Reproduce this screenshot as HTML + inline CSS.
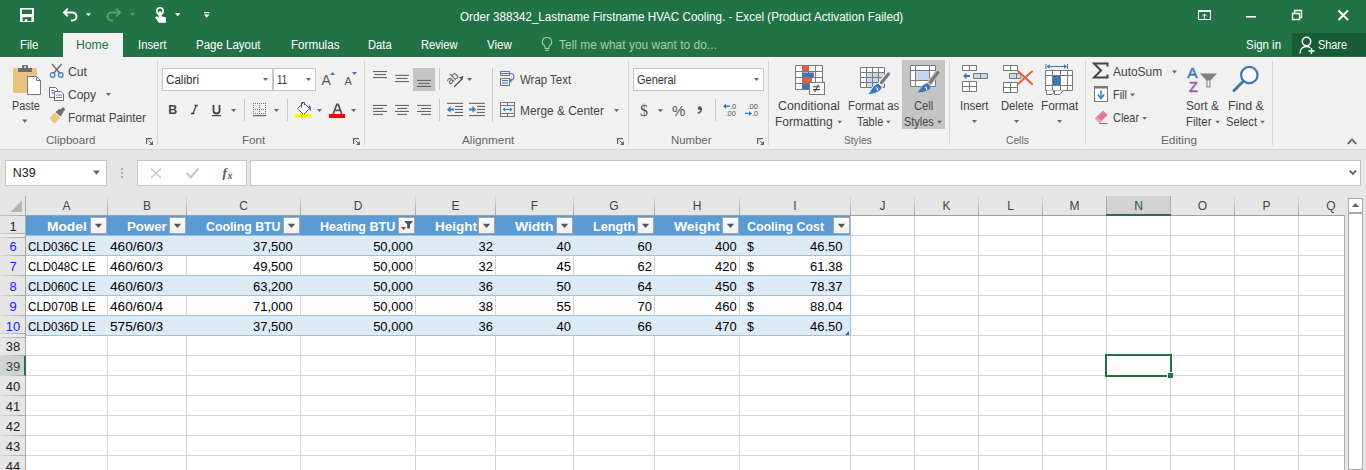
<!DOCTYPE html>
<html><head><meta charset="utf-8"><style>
html,body{margin:0;padding:0;width:1366px;height:470px;overflow:hidden;background:#fff;}
body{position:relative;font-family:"Liberation Sans",sans-serif;}
.t{position:absolute;white-space:nowrap;transform-origin:0 0;}
.r{position:absolute;}
</style></head><body>
<div class="r" style="left:0px;top:0px;width:1366px;height:57px;background:#217346;"></div><div class="r" style="left:63px;top:33px;width:60px;height:24px;background:#f1f1f1;"></div><div class="r" style="left:1292px;top:33px;width:74px;height:23px;background:#175c35;"></div><div class="r" style="left:0px;top:57px;width:1366px;height:92px;background:#f1f1f1;"></div><div class="r" style="left:0px;top:149px;width:1366px;height:1px;background:#d5d5d5;"></div><div class="r" style="left:0px;top:150px;width:1366px;height:46px;background:#e6e6e6;"></div><div class="r" style="left:5px;top:160px;width:102px;height:26px;background:#fff;box-sizing:border-box;border:1px solid #c6c6c6;"></div><div class="r" style="left:137px;top:160px;width:110px;height:26px;background:#fff;box-sizing:border-box;border:1px solid #c6c6c6;"></div><div class="r" style="left:250px;top:160px;width:1111px;height:26px;background:#fff;box-sizing:border-box;border:1px solid #c6c6c6;"></div><div class="r" style="left:0px;top:196px;width:1344px;height:20px;background:#e6e6e6;"></div><div class="r" style="left:0px;top:196px;width:26px;height:274px;background:#e6e6e6;"></div><div class="r" style="left:26px;top:216px;width:1318px;height:254px;background:#fff;"></div><svg class="r" style="left:0;top:0" width="1366" height="470"><rect x="107" y="216" width="1" height="254" fill="#d4d4d4"/><rect x="186" y="216" width="1" height="254" fill="#d4d4d4"/><rect x="300" y="216" width="1" height="254" fill="#d4d4d4"/><rect x="415" y="216" width="1" height="254" fill="#d4d4d4"/><rect x="495" y="216" width="1" height="254" fill="#d4d4d4"/><rect x="573" y="216" width="1" height="254" fill="#d4d4d4"/><rect x="654" y="216" width="1" height="254" fill="#d4d4d4"/><rect x="739" y="216" width="1" height="254" fill="#d4d4d4"/><rect x="850" y="216" width="1" height="254" fill="#d4d4d4"/><rect x="914" y="216" width="1" height="254" fill="#d4d4d4"/><rect x="978" y="216" width="1" height="254" fill="#d4d4d4"/><rect x="1042" y="216" width="1" height="254" fill="#d4d4d4"/><rect x="1106" y="216" width="1" height="254" fill="#d4d4d4"/><rect x="1170" y="216" width="1" height="254" fill="#d4d4d4"/><rect x="1234" y="216" width="1" height="254" fill="#d4d4d4"/><rect x="1298" y="216" width="1" height="254" fill="#d4d4d4"/><rect x="26" y="235" width="1318" height="1" fill="#d4d4d4"/><rect x="26" y="255" width="1318" height="1" fill="#d4d4d4"/><rect x="26" y="275" width="1318" height="1" fill="#d4d4d4"/><rect x="26" y="295" width="1318" height="1" fill="#d4d4d4"/><rect x="26" y="315" width="1318" height="1" fill="#d4d4d4"/><rect x="26" y="335" width="1318" height="1" fill="#d4d4d4"/><rect x="26" y="355" width="1318" height="1" fill="#d4d4d4"/><rect x="26" y="375" width="1318" height="1" fill="#d4d4d4"/><rect x="26" y="395" width="1318" height="1" fill="#d4d4d4"/><rect x="26" y="415" width="1318" height="1" fill="#d4d4d4"/><rect x="26" y="435" width="1318" height="1" fill="#d4d4d4"/><rect x="26" y="455" width="1318" height="1" fill="#d4d4d4"/><rect x="26" y="475" width="1318" height="1" fill="#d4d4d4"/></svg><div class="r" style="left:26px;top:216px;width:825px;height:19px;background:#5b9bd5;"></div><div class="r" style="left:26px;top:236px;width:825px;height:19px;background:#ddebf7;"></div><div class="r" style="left:26px;top:255px;width:825px;height:1px;background:#9bc2e6;"></div><div class="r" style="left:26px;top:275px;width:825px;height:1px;background:#9bc2e6;"></div><div class="r" style="left:26px;top:276px;width:825px;height:19px;background:#ddebf7;"></div><div class="r" style="left:26px;top:295px;width:825px;height:1px;background:#9bc2e6;"></div><div class="r" style="left:26px;top:315px;width:825px;height:1px;background:#9bc2e6;"></div><div class="r" style="left:26px;top:316px;width:825px;height:19px;background:#ddebf7;"></div><div class="r" style="left:26px;top:335px;width:825px;height:1px;background:#9bc2e6;"></div><div class="r" style="left:26px;top:235px;width:825px;height:1px;background:#9bc2e6;"></div><div class="r" style="left:850px;top:216px;width:1px;height:120px;background:#9bc2e6;"></div><div class="r" style="left:1106px;top:196px;width:64px;height:19px;background:#d2d2d2;"></div><div class="r" style="left:1106px;top:196px;width:1px;height:19px;background:#ababab;"></div><div class="r" style="left:1170px;top:196px;width:1px;height:19px;background:#ababab;"></div><div class="r" style="left:107px;top:196px;width:1px;height:19px;background:linear-gradient(#e0e0e0,#a0a0a0);"></div><div class="r" style="left:186px;top:196px;width:1px;height:19px;background:linear-gradient(#e0e0e0,#a0a0a0);"></div><div class="r" style="left:300px;top:196px;width:1px;height:19px;background:linear-gradient(#e0e0e0,#a0a0a0);"></div><div class="r" style="left:415px;top:196px;width:1px;height:19px;background:linear-gradient(#e0e0e0,#a0a0a0);"></div><div class="r" style="left:495px;top:196px;width:1px;height:19px;background:linear-gradient(#e0e0e0,#a0a0a0);"></div><div class="r" style="left:573px;top:196px;width:1px;height:19px;background:linear-gradient(#e0e0e0,#a0a0a0);"></div><div class="r" style="left:654px;top:196px;width:1px;height:19px;background:linear-gradient(#e0e0e0,#a0a0a0);"></div><div class="r" style="left:739px;top:196px;width:1px;height:19px;background:linear-gradient(#e0e0e0,#a0a0a0);"></div><div class="r" style="left:850px;top:196px;width:1px;height:19px;background:linear-gradient(#e0e0e0,#a0a0a0);"></div><div class="r" style="left:914px;top:196px;width:1px;height:19px;background:linear-gradient(#e0e0e0,#a0a0a0);"></div><div class="r" style="left:978px;top:196px;width:1px;height:19px;background:linear-gradient(#e0e0e0,#a0a0a0);"></div><div class="r" style="left:1042px;top:196px;width:1px;height:19px;background:linear-gradient(#e0e0e0,#a0a0a0);"></div><div class="r" style="left:1234px;top:196px;width:1px;height:19px;background:linear-gradient(#e0e0e0,#a0a0a0);"></div><div class="r" style="left:1298px;top:196px;width:1px;height:19px;background:linear-gradient(#e0e0e0,#a0a0a0);"></div><div class="r" style="left:0px;top:215px;width:1344px;height:1px;background:linear-gradient(90deg,#c8c8c8,#a0a0a0 30px,#a0a0a0);"></div><div class="r" style="left:1106px;top:214px;width:65px;height:2px;background:#217346;"></div><div class="r" style="left:25px;top:196px;width:1px;height:274px;background:#ababab;"></div><svg class="r" style="left:0;top:196px" width="26" height="20"><path d="M22 4.5V16H10.5Z" fill="#b4b4b4"/></svg><div class="r" style="left:1344px;top:215px;width:1px;height:255px;background:#ababab;"></div><div class="r" style="left:1344px;top:196px;width:22px;height:19px;background:#e6e6e6;"></div><div class="r" style="left:1345px;top:215px;width:21px;height:255px;background:#e6e6e6;"></div><div class="r" style="left:1348px;top:198px;width:15px;height:272px;background:#fff;box-sizing:border-box;border:1px solid #ababab;"></div><div class="r" style="left:1348px;top:212px;width:15px;height:2px;background:#ababab;"></div><svg class="r" style="left:1348px;top:198px" width="15" height="14"><path d="M4 9H11L7.5 5Z" fill="#666"/></svg><div class="r" style="left:0px;top:233px;width:25px;height:1px;background:linear-gradient(90deg,#d0d0d0,#a8a8a8);"></div><div class="r" style="left:0px;top:234px;width:25px;height:3px;background:#ececec;"></div><div class="r" style="left:0px;top:237px;width:25px;height:1px;background:linear-gradient(90deg,#d0d0d0,#a8a8a8);"></div><div class="r" style="left:0px;top:255px;width:25px;height:1px;background:linear-gradient(90deg,#dadada,#a8a8a8);"></div><div class="r" style="left:0px;top:275px;width:25px;height:1px;background:linear-gradient(90deg,#dadada,#a8a8a8);"></div><div class="r" style="left:0px;top:295px;width:25px;height:1px;background:linear-gradient(90deg,#dadada,#a8a8a8);"></div><div class="r" style="left:0px;top:315px;width:25px;height:1px;background:linear-gradient(90deg,#dadada,#a8a8a8);"></div><div class="r" style="left:0px;top:333px;width:25px;height:1px;background:linear-gradient(90deg,#d0d0d0,#a8a8a8);"></div><div class="r" style="left:0px;top:334px;width:25px;height:3px;background:#ececec;"></div><div class="r" style="left:0px;top:337px;width:25px;height:1px;background:linear-gradient(90deg,#d0d0d0,#a8a8a8);"></div><div class="r" style="left:0px;top:355px;width:25px;height:1px;background:linear-gradient(90deg,#dadada,#a8a8a8);"></div><div class="r" style="left:0px;top:356px;width:25px;height:19px;background:#d2d2d2;"></div><div class="r" style="left:24px;top:356px;width:2px;height:20px;background:#217346;"></div><div class="r" style="left:0px;top:375px;width:25px;height:1px;background:linear-gradient(90deg,#dadada,#a8a8a8);"></div><div class="r" style="left:0px;top:395px;width:25px;height:1px;background:linear-gradient(90deg,#dadada,#a8a8a8);"></div><div class="r" style="left:0px;top:415px;width:25px;height:1px;background:linear-gradient(90deg,#dadada,#a8a8a8);"></div><div class="r" style="left:0px;top:435px;width:25px;height:1px;background:linear-gradient(90deg,#dadada,#a8a8a8);"></div><div class="r" style="left:0px;top:455px;width:25px;height:1px;background:linear-gradient(90deg,#dadada,#a8a8a8);"></div><div class="r" style="left:0px;top:475px;width:25px;height:1px;background:linear-gradient(90deg,#dadada,#a8a8a8);"></div>
<svg class="r" style="left:0;top:0" width="1366" height="470"><rect x="20" y="8" width="14" height="14" rx="0.5" fill="#fff"/><rect x="22" y="9.6" width="10" height="4.4" fill="#217346"/><rect x="22.6" y="17.2" width="8.8" height="3.9" fill="#217346"/><rect x="24.8" y="19.3" width="2.4" height="2" fill="#fff"/><path d="M64.5 12.5H72.5A4 4 0 0 1 72.5 20.5H71" fill="none" stroke="#fff" stroke-width="2"/><path d="M67.8 8.8L64 12.5L67.8 16.2" fill="none" stroke="#fff" stroke-width="2"/><path d="M86 13.2H91L88.5 16.2Z" fill="#fff"/><path d="M119.5 12.5H111.5A4 4 0 0 0 111.5 20.5H113" fill="none" stroke="#5c9c76" stroke-width="2"/><path d="M116.2 8.8L120 12.5L116.2 16.2" fill="none" stroke="#5c9c76" stroke-width="2"/><path d="M130 13H135L132.5 16.0Z" fill="#5c9c76"/><circle cx="160" cy="11" r="3.2" fill="none" stroke="#fff" stroke-width="1.6"/><path d="M158.6 11.5V17.5L156.5 16.2L155 17.3L158.8 22.8H166V17.5L161.5 16.3V11.5Z" fill="#fff"/><path d="M175 13H180.4L177.7 16.240000000000002Z" fill="#fff"/><rect x="204" y="12" width="5.5" height="1.2" fill="#fff"/><path d="M204 14.5H209.5L206.75 17.8Z" fill="#fff"/><rect x="1198.5" y="10.5" width="12" height="9" fill="none" stroke="#fff" stroke-width="1"/><rect x="1198.5" y="10.5" width="12" height="1.5" fill="#fff"/><path d="M1204.5 19V14M1202.3 16.2L1204.5 14L1206.7 16.2" fill="none" stroke="#fff" stroke-width="1"/><rect x="1246" y="16" width="10" height="1.6" fill="#fff"/><path d="M1292.5 13.5H1299.5V19.5H1292.5Z M1294.5 13.5V10.5H1301.5V17.5H1299.5" fill="none" stroke="#fff" stroke-width="1.3"/><path d="M1338.5 10.5L1348 20M1348 10.5L1338.5 20" stroke="#fff" stroke-width="2"/><path d="M547 37.5A4.3 4.3 0 0 0 544.2 45.3C545.2 46.3 545.2 47 545.3 48.5H548.7C548.8 47 548.8 46.3 549.8 45.3A4.3 4.3 0 0 0 547 37.5Z" fill="none" stroke="#a8cbb4" stroke-width="1.1"/><path d="M545.3 50.3H548.7" stroke="#a8cbb4" stroke-width="1.2"/><circle cx="1306.5" cy="41.5" r="4.2" fill="none" stroke="#fff" stroke-width="1.4"/><path d="M1300 53.5C1300 49 1303 46.5 1306.5 46.5C1308 46.5 1309.3 46.9 1310.3 47.6" fill="none" stroke="#fff" stroke-width="1.4"/><path d="M1311.5 48V54M1308.5 51H1314.5" stroke="#fff" stroke-width="1.4"/><rect x="13" y="68" width="24" height="25" rx="1.5" fill="#e9c47f"/><rect x="18" y="68" width="14" height="4" rx="0.8" fill="#6d6d6d"/><rect x="22" y="65" width="6" height="4" rx="1.2" fill="#6d6d6d"/><rect x="24" y="66.2" width="2" height="1.5" fill="#f1f1f1"/><path d="M27.5 76.5H36.5L40.5 80.5V94.5H27.5Z" fill="#fff" stroke="#7a7a7a" stroke-width="1"/><path d="M36.5 76.5V80.5H40.5" fill="none" stroke="#7a7a7a" stroke-width="1"/><path d="M22 119.5H27.5L24.75 122.8Z" fill="#666"/><path d="M52 64L60 73.5M61.5 64L53.5 73.5" stroke="#6d6d6d" stroke-width="1.4"/><circle cx="52.7" cy="75" r="2.3" fill="none" stroke="#3e77b8" stroke-width="1.2"/><circle cx="60.8" cy="75" r="2.3" fill="none" stroke="#3e77b8" stroke-width="1.2"/><path d="M49.5 87.5H55.5L57.5 89.5V97.5H49.5Z" fill="#fff" stroke="#6d6d6d"/><path d="M54.5 91.5H61L63.5 94V100.5H54.5Z" fill="#fff" stroke="#6d6d6d"/><path d="M51 90.5H54M51 93H54M56 95H62M56 97.5H62" stroke="#3e77b8" stroke-width="0.9"/><path d="M106 93H111L108.5 96.0Z" fill="#666"/><path d="M49.5 118L55 112.5L60 117.5L54.5 123.5C52.5 122 51 120 49.5 118Z" fill="#e9c47f"/><path d="M55.5 112L59.5 108.8L63.3 112.6L60.5 116.5Z" fill="#6d6d6d"/><path d="M60 110L63 107L65.5 109.5L62.5 112.5Z" fill="#6d6d6d"/><path d="M146.6 144V138.6H152" fill="none" stroke="#666" stroke-width="1.2"/><path d="M149 141" fill="none"/><path d="M153 141V145H149Z" fill="#666"/><path d="M148.5 140.5L151.5 143.5" stroke="#666" stroke-width="1"/><path d="M353.6 144V138.6H359" fill="none" stroke="#666" stroke-width="1.2"/><path d="M356 141" fill="none"/><path d="M360 141V145H356Z" fill="#666"/><path d="M355.5 140.5L358.5 143.5" stroke="#666" stroke-width="1"/><path d="M617.6 144V138.6H623" fill="none" stroke="#666" stroke-width="1.2"/><path d="M620 141" fill="none"/><path d="M624 141V145H620Z" fill="#666"/><path d="M619.5 140.5L622.5 143.5" stroke="#666" stroke-width="1"/><path d="M757.6 144V138.6H763" fill="none" stroke="#666" stroke-width="1.2"/><path d="M760 141" fill="none"/><path d="M764 141V145H760Z" fill="#666"/><path d="M759.5 140.5L762.5 143.5" stroke="#666" stroke-width="1"/><rect x="157.0" y="61" width="1" height="84" fill="#d4d4d4"/><rect x="364.0" y="61" width="1" height="84" fill="#d4d4d4"/><rect x="628.0" y="61" width="1" height="84" fill="#d4d4d4"/><rect x="768.0" y="61" width="1" height="84" fill="#d4d4d4"/><rect x="949.0" y="61" width="1" height="84" fill="#d4d4d4"/><rect x="1085.0" y="61" width="1" height="84" fill="#d4d4d4"/><rect x="1272.0" y="61" width="1" height="84" fill="#d4d4d4"/><rect x="162.5" y="68.5" width="110" height="22" fill="#fff" stroke="#c6c6c6"/><rect x="273.5" y="68.5" width="42" height="22" fill="#fff" stroke="#c6c6c6"/><path d="M263 78H268L265.5 81.0Z" fill="#666"/><path d="M306 78H311L308.5 81.0Z" fill="#666"/><text x="321.5" y="85" font-family="Liberation Sans" font-size="14" fill="#555">A</text><path d="M330 75L332.5 72L335 75Z" fill="#3e77b8"/><text x="344.5" y="85" font-family="Liberation Sans" font-size="11" fill="#555">A</text><path d="M352 72H357L354.5 75Z" fill="#3e77b8"/><text x="168.2" y="114" font-family="Liberation Sans" font-weight="bold" font-size="12.5" fill="#444">B</text><path d="M194.5 105.5H198M191 113.5H194.5M196.3 105.5L192.8 113.5" stroke="#444" stroke-width="1.3" fill="none"/><path d="M213.5 105V110.5C213.5 112.5 215 113.5 216.5 113.5C218 113.5 219.5 112.5 219.5 110.5V105" fill="none" stroke="#444" stroke-width="1.8"/><rect x="212" y="115" width="9" height="1.2" fill="#444"/><path d="M231 109H236L233.5 112.0Z" fill="#666"/><rect x="244" y="99" width="1" height="22" fill="#c8c8c8"/><path d="M253 103h1v1h-1zM255 103h1v1h-1zM257 103h1v1h-1zM259 103h1v1h-1zM261 103h1v1h-1zM263 103h1v1h-1zM265 103h1v1h-1zM253 105h1v1h-1zM259 105h1v1h-1zM265 105h1v1h-1zM253 107h1v1h-1zM259 107h1v1h-1zM265 107h1v1h-1zM253 109h1v1h-1zM255 109h1v1h-1zM257 109h1v1h-1zM259 109h1v1h-1zM261 109h1v1h-1zM263 109h1v1h-1zM265 109h1v1h-1zM253 111h1v1h-1zM259 111h1v1h-1zM265 111h1v1h-1zM253 113h1v1h-1zM255 113h1v1h-1zM257 113h1v1h-1zM259 113h1v1h-1zM261 113h1v1h-1zM263 113h1v1h-1zM265 113h1v1h-1z" fill="#777"/><rect x="253" y="115" width="13" height="1.2" fill="#666"/><path d="M274 109H279L276.5 112.0Z" fill="#666"/><rect x="287" y="99" width="1" height="22" fill="#c8c8c8"/><path d="M297.5 108.5L303.5 102.5L309.5 108.5L303.5 114.5Z" fill="#fff" stroke="#555" stroke-width="1"/><path d="M301.5 107.5V102.5H304.5V105" fill="none" stroke="#555" stroke-width="1"/><path d="M308.5 104.5C311 106 311.5 108 310.5 111.5L309 108.5Z" fill="#3e77b8"/><rect x="295" y="114" width="16" height="4" fill="#ffff00"/><path d="M317 109H322L319.5 112.0Z" fill="#666"/><path d="M333.2 114L336.8 104.3H338.2L341.8 114M334.8 110.3H340.2" fill="none" stroke="#555" stroke-width="1.8"/><rect x="329" y="114" width="16" height="4" fill="#ff0000"/><path d="M351 109H356L353.5 112.0Z" fill="#666"/><rect x="373" y="71.0" width="14" height="1.1" fill="#666"/><rect x="374.3" y="74.0" width="11.699999999999989" height="1.1" fill="#666"/><rect x="373" y="77.0" width="14" height="1.1" fill="#666"/><rect x="395" y="74.8" width="14" height="1.1" fill="#666"/><rect x="396.3" y="77.9" width="11.300000000000011" height="1.1" fill="#666"/><rect x="395" y="81.0" width="14" height="1.1" fill="#666"/><rect x="413" y="68" width="22" height="23" fill="#c5c5c5"/><rect x="417" y="79.9" width="14" height="1.1" fill="#666"/><rect x="418.3" y="82.9" width="11.399999999999977" height="1.1" fill="#666"/><rect x="417" y="85.9" width="14" height="1.1" fill="#666"/><rect x="439" y="68" width="1" height="22" fill="#c8c8c8"/><text x="0" y="0" transform="translate(450.2 85.2) rotate(-45)" font-family="Liberation Sans" font-size="11.5" fill="#555">ab</text><path d="M454 87L462 79" stroke="#555" stroke-width="1.2"/><path d="M463.5 76L459 77.3L462.2 80.5Z" fill="#555"/><path d="M467 78H472L469.5 81.0Z" fill="#666"/><rect x="373" y="104.9" width="14" height="1.1" fill="#666"/><rect x="373" y="107.9" width="10" height="1.1" fill="#666"/><rect x="373" y="110.9" width="14" height="1.1" fill="#666"/><rect x="373" y="113.9" width="10" height="1.1" fill="#666"/><rect x="395" y="104.9" width="14" height="1.1" fill="#666"/><rect x="397.2" y="107.9" width="9.800000000000011" height="1.1" fill="#666"/><rect x="395" y="110.9" width="14" height="1.1" fill="#666"/><rect x="397.2" y="113.9" width="9.800000000000011" height="1.1" fill="#666"/><rect x="417" y="104.9" width="14" height="1.1" fill="#666"/><rect x="421" y="107.9" width="10" height="1.1" fill="#666"/><rect x="417" y="110.9" width="14" height="1.1" fill="#666"/><rect x="421" y="113.9" width="10" height="1.1" fill="#666"/><rect x="439" y="99" width="1" height="22" fill="#c8c8c8"/><rect x="447" y="102.8" width="16" height="1.1" fill="#666"/><rect x="455" y="105.9" width="8" height="1.1" fill="#666"/><rect x="455" y="108.9" width="8" height="1.1" fill="#666"/><rect x="455" y="111.9" width="8" height="1.1" fill="#666"/><rect x="447" y="115.0" width="16" height="1.1" fill="#666"/><path d="M447 109.4L450.5 106V108.4H454V110.4H450.5V112.8Z" fill="#3e77b8"/><rect x="469" y="102.8" width="16" height="1.1" fill="#666"/><rect x="477" y="105.9" width="8" height="1.1" fill="#666"/><rect x="477" y="108.9" width="8" height="1.1" fill="#666"/><rect x="477" y="111.9" width="8" height="1.1" fill="#666"/><rect x="469" y="115.0" width="16" height="1.1" fill="#666"/><path d="M476 109.4L472.5 106V108.4H469V110.4H472.5V112.8Z" fill="#3e77b8"/><rect x="492" y="68" width="1" height="54" fill="#c8c8c8"/><rect x="500.5" y="71.5" width="9" height="4" fill="none" stroke="#777"/><rect x="500.5" y="78.5" width="9" height="7" fill="none" stroke="#777"/><path d="M501 73.5H511" stroke="#3e77b8"/><path d="M502 80.5H508M502 83H508" stroke="#3e77b8"/><path d="M511 73.5C515 73.5 515 80 510.5 80.5" fill="none" stroke="#3e77b8" stroke-width="1.1"/><path d="M509 80.5L511.5 78V83Z" fill="#3e77b8"/><rect x="500.5" y="102.5" width="14" height="14" fill="none" stroke="#777"/><path d="M501 105.5H514M501 113.5H514M507.5 103V105M507.5 114V116" stroke="#777"/><path d="M503 109.5H512" stroke="#3e77b8"/><path d="M502.5 109.5L505 107.5V111.5ZM512.5 109.5L510 107.5V111.5Z" fill="#3e77b8"/><path d="M614 109H619L616.5 112.0Z" fill="#666"/><rect x="633.5" y="68.5" width="130" height="22" fill="#fff" stroke="#c6c6c6"/><path d="M754 78H759L756.5 81.0Z" fill="#666"/><text x="640" y="115.5" font-family="Liberation Serif" font-size="16" fill="#555">$</text><path d="M658 109.3H663L660.5 112.3Z" fill="#666"/><text x="672" y="116" font-family="Liberation Sans" font-size="15" fill="#555">%</text><circle cx="699.8" cy="108.2" r="1.9" fill="#555"/><path d="M701.2 108.3C701.6 110.5 700.5 112.2 697.8 113.2" fill="none" stroke="#555" stroke-width="1.5"/><rect x="715" y="99" width="1" height="22" fill="#c8c8c8"/><text x="730" y="108.7" font-family="Liberation Sans" font-size="7.5" fill="#555">.0</text><text x="725.5" y="115.5" font-family="Liberation Sans" font-size="7.5" fill="#555">.00</text><path d="M723 106.3L726 103.8V105.6H730V107H726V108.8Z" fill="#3e77b8"/><text x="747.5" y="108.7" font-family="Liberation Sans" font-size="7.5" fill="#555">.00</text><text x="752" y="115.5" font-family="Liberation Sans" font-size="7.5" fill="#555">.0</text><path d="M752 113.4L749 110.9V112.7H745V114.1H749V115.9Z" fill="#3e77b8"/><rect x="795.5" y="65.5" width="27" height="24" fill="#fff"/><path d="M795.5 65.5H822.5V89.5H795.5ZM802.5 65.5V89.5M808.5 65.5V89.5M815.5 65.5V89.5M795.5 71.5H822.5M795.5 77.5H822.5M795.5 83.5H822.5" fill="none" stroke="#7a7a7a"/><rect x="802" y="66" width="7" height="5" fill="#e0603a"/><rect x="802" y="72.5" width="12" height="4.5" fill="#3e77b8"/><rect x="802" y="78" width="10" height="5" fill="#e0603a"/><rect x="802" y="84" width="7" height="5" fill="#3e77b8"/><rect x="809.5" y="82.5" width="15" height="12" fill="#fff" stroke="#7a7a7a"/><path d="M813 86.8H820M813 89.6H820M818.5 84.5L814.5 92" stroke="#444" stroke-width="1.1"/><rect x="860.5" y="67.5" width="24" height="20" fill="#fff"/><rect x="866.5" y="72.5" width="18" height="15" fill="#c5d9f1"/><path d="M860.5 67.5H884.5V87.5H860.5ZM866.5 67.5V87.5M872.5 67.5V87.5M878.5 67.5V87.5M860.5 72.5H884.5M860.5 77.5H884.5M860.5 82.5H884.5" fill="none" stroke="#7a7a7a"/><path d="M881.5 82.5L888.5 74" stroke="#f1f1f1" stroke-width="5.5" stroke-linecap="round"/><path d="M881.5 82.5L888.5 74" stroke="#7a7a7a" stroke-width="3.2" stroke-linecap="round"/><path d="M878.2 83.2L882.3 87C881.5 91.5 875 94.2 867.5 94.8C870.5 91.5 872.5 85 878.2 83.2Z" fill="#3e77b8" stroke="#f1f1f1" stroke-width="1"/><path d="M876 87.5C877.5 88 878 89.5 877.5 90.5" fill="none" stroke="#fff" stroke-width="1.2"/><rect x="902" y="60" width="43" height="69" fill="#c5c5c5"/><rect x="910.5" y="65.5" width="25" height="21" fill="#fff"/><rect x="915.5" y="70.5" width="14" height="10" fill="#c5d9f1"/><path d="M910.5 65.5H935.5V86.5H910.5ZM915.5 65.5V86.5M929.5 65.5V86.5M910.5 70.5H935.5M910.5 80.5H935.5" fill="none" stroke="#7a7a7a"/><path d="M930.5 82L937.8 72.5" stroke="#c5c5c5" stroke-width="5.5" stroke-linecap="round"/><path d="M930.5 82L937.8 72.5" stroke="#7a7a7a" stroke-width="3.2" stroke-linecap="round"/><path d="M927.2 82.8L931.3 86.6C930.5 90.8 924.5 92.8 916.5 93.2C919.5 90 921.5 84.6 927.2 82.8Z" fill="#3e77b8" stroke="#c5c5c5" stroke-width="1"/><path d="M925 87C926.5 87.5 927 89 926.5 90" fill="none" stroke="#fff" stroke-width="1.2"/><path d="M837.4 120.7H842L839.7 123.46000000000002Z" fill="#666"/><path d="M886 120.7H890.7L888.35 123.52000000000002Z" fill="#666"/><path d="M937 120.7H942L939.5 123.7Z" fill="#666"/><path d="M962.5 65.5H976.5V70.5H962.5ZM969.5 65.5V70.5" fill="#fff" stroke="#777"/><path d="M973.5 73.5H987.5V78.5H973.5ZM980.5 73.5V78.5" fill="#c5d9f1" stroke="#777"/><path d="M962.5 81.5H976.5V91.5H962.5ZM969.5 81.5V91.5M962.5 86.5H976.5" fill="#fff" stroke="#777"/><path d="M963 76L966.5 72.8V75H970V77H966.5V79.2Z" fill="#3e77b8"/><path d="M972 120H977L974.5 123.0Z" fill="#666"/><path d="M1003.5 65.5H1017.5V70.5H1003.5ZM1010.5 65.5V70.5" fill="#fff" stroke="#777"/><path d="M1009.5 73.5H1021V78.5H1009.5ZM1016.5 73.5V78.5" fill="#c5d9f1" stroke="#777"/><path d="M1003.5 82.5H1017.5V92.5H1003.5ZM1010.5 82.5V92.5M1003.5 87.5H1017.5" fill="#fff" stroke="#777"/><path d="M1018 71L1032 84M1032 71.5L1018 84" stroke="#e0603a" stroke-width="2" stroke-linecap="round"/><path d="M1014 120H1019L1016.5 123.0Z" fill="#666"/><path d="M1046 64V69M1067.5 64V69M1047 66.5H1066.5" stroke="#3e77b8" stroke-width="1"/><path d="M1046.5 66.5L1049.5 64.3V68.7ZM1067 66.5L1064 64.3V68.7Z" fill="#3e77b8"/><rect x="1045.5" y="70.5" width="27" height="20" fill="#fff"/><path d="M1045.5 70.5H1072.5V90.5H1045.5ZM1052.5 70.5V90.5M1060.5 70.5V90.5M1067.5 70.5V90.5M1045.5 75.5H1072.5M1045.5 85.5H1072.5" fill="none" stroke="#7a7a7a"/><rect x="1053" y="76" width="7" height="9" fill="#3e77b8"/><path d="M1046.5 90.5V94.5H1052L1053.5 92.5V90.5M1054.5 90.5V94.5H1060L1063 90.5" fill="#fff" stroke="#7a7a7a"/><path d="M1057 120H1062L1059.5 123.0Z" fill="#666"/><path d="M1107.5 66.5V63.5H1094L1101 70.5L1094 77.5H1107.5V74.5" fill="none" stroke="#444" stroke-width="2"/><path d="M1172 70.5H1177L1174.5 73.5Z" fill="#666"/><rect x="1094.5" y="86.5" width="13" height="15" fill="#fff" stroke="#777"/><rect x="1094" y="86" width="14" height="2.5" fill="#777"/><path d="M1101 90.5V97.5" stroke="#3e77b8" stroke-width="1.5"/><path d="M1097.8 94.5L1101 98.5L1104.2 94.5" fill="none" stroke="#3e77b8" stroke-width="1.5"/><path d="M1130 93.5H1135L1132.5 96.5Z" fill="#666"/><path d="M1095 118.5L1103 110.5L1107.5 115L1099.5 123Z" fill="#e8788f"/><path d="M1095 118.5L1099.5 123L1101.5 121L1097 116.5Z" fill="#f0a0ae"/><path d="M1099 123.5H1107.5" stroke="#777"/><path d="M1142.3 117H1147L1144.65 119.82000000000002Z" fill="#666"/><text x="1187.3" y="78" font-family="Liberation Sans" font-size="15.5" fill="#3e77b8" stroke="#3e77b8" stroke-width="0.5">A</text><text x="1189" y="91.5" font-family="Liberation Sans" font-size="14.5" fill="#9b59b6" stroke="#9b59b6" stroke-width="0.5">Z</text><path d="M1200 73.5H1217L1210.5 80.5V87.5H1206.5V80.5Z" fill="#808080"/><rect x="1207.5" y="80.5" width="2" height="6" fill="#f1f1f1"/><path d="M1215.3 120.8H1220L1217.65 123.62000000000002Z" fill="#666"/><path d="M1260.2 120.8H1264.8L1262.5 123.55999999999995Z" fill="#666"/><circle cx="1249.3" cy="75" r="8.2" fill="#fff" stroke="#3e77b8" stroke-width="2.2"/><path d="M1243.5 81L1234 90.5" stroke="#3e77b8" stroke-width="3" stroke-linecap="round"/><path d="M1347.8 143.8L1352 139.6L1356.2 143.8" fill="none" stroke="#666" stroke-width="1.9"/><path d="M93 170.5H100L96.5 174.7Z" fill="#666"/><rect x="121" y="168" width="2" height="2" fill="#aaa"/><rect x="121" y="172" width="2" height="2" fill="#aaa"/><rect x="121" y="176" width="2" height="2" fill="#aaa"/><path d="M151 168.5L161 178M161 168.5L151 178" stroke="#c4c4c4" stroke-width="1.3"/><path d="M186.5 173L190.8 177.3L198.5 168.5" fill="none" stroke="#c8c8c8" stroke-width="2.3"/><text x="222.5" y="176.5" font-family="Liberation Serif" font-style="italic" font-weight="bold" font-size="13" fill="#555">f</text><text x="227.5" y="178.5" font-family="Liberation Serif" font-style="italic" font-weight="bold" font-size="10" fill="#555">x</text><path d="M1349.6 170.6L1352.8 173.8L1356 170.6" fill="none" stroke="#666" stroke-width="1.9"/></svg>
<div class="t" style="left:460.30px;top:10.72px;font-size:12.5px;line-height:12.5px;font-weight:normal;color:#fff;transform:scaleX(0.9318);">Order 388342_Lastname Firstname HVAC Cooling. - Excel (Product Activation Failed)</div><div class="t" style="left:20.20px;top:38.92px;font-size:12.5px;line-height:12.5px;font-weight:normal;color:#fff;transform:scaleX(0.9082);">File</div><div class="t" style="left:76.40px;top:38.92px;font-size:12.5px;line-height:12.5px;font-weight:normal;color:#217346;transform:scaleX(0.9775);">Home</div><div class="t" style="left:138.30px;top:38.92px;font-size:12.5px;line-height:12.5px;font-weight:normal;color:#fff;transform:scaleX(0.9056);">Insert</div><div class="t" style="left:196.30px;top:38.92px;font-size:12.5px;line-height:12.5px;font-weight:normal;color:#fff;transform:scaleX(0.9188);">Page Layout</div><div class="t" style="left:290.50px;top:38.92px;font-size:12.5px;line-height:12.5px;font-weight:normal;color:#fff;transform:scaleX(0.9309);">Formulas</div><div class="t" style="left:368.00px;top:38.92px;font-size:12.5px;line-height:12.5px;font-weight:normal;color:#fff;transform:scaleX(0.8960);">Data</div><div class="t" style="left:421.30px;top:38.92px;font-size:12.5px;line-height:12.5px;font-weight:normal;color:#fff;transform:scaleX(0.8940);">Review</div><div class="t" style="left:487.00px;top:38.92px;font-size:12.5px;line-height:12.5px;font-weight:normal;color:#fff;transform:scaleX(0.9239);">View</div><div class="t" style="left:558.70px;top:38.92px;font-size:12.5px;line-height:12.5px;font-weight:normal;color:#a8cbb4;transform:scaleX(0.9584);">Tell me what you want to do...</div><div class="t" style="left:1246.00px;top:38.92px;font-size:12.5px;line-height:12.5px;font-weight:normal;color:#fff;transform:scaleX(0.9162);">Sign in</div><div class="t" style="left:1318.00px;top:38.92px;font-size:12.5px;line-height:12.5px;font-weight:normal;color:#fff;transform:scaleX(0.8696);">Share</div><div class="t" style="left:11.50px;top:99.84px;font-size:12px;line-height:12px;font-weight:normal;color:#444;transform:scaleX(0.9088);">Paste</div><div class="t" style="left:68.00px;top:65.64px;font-size:12px;line-height:12px;font-weight:normal;color:#444;transform:scaleX(1.0160);">Cut</div><div class="t" style="left:68.00px;top:88.84px;font-size:12px;line-height:12px;font-weight:normal;color:#444;">Copy</div><div class="t" style="left:68.00px;top:111.54px;font-size:12px;line-height:12px;font-weight:normal;color:#444;transform:scaleX(0.9830);">Format Painter</div><div class="t" style="left:45.50px;top:135.43px;font-size:11.3px;line-height:11.3px;font-weight:normal;color:#666;transform:scaleX(1.0238);">Clipboard</div><div class="t" style="left:241.50px;top:135.43px;font-size:11.3px;line-height:11.3px;font-weight:normal;color:#666;transform:scaleX(1.0265);">Font</div><div class="t" style="left:519.60px;top:74.14px;font-size:12px;line-height:12px;font-weight:normal;color:#444;transform:scaleX(0.9534);">Wrap Text</div><div class="t" style="left:519.60px;top:104.84px;font-size:12px;line-height:12px;font-weight:normal;color:#444;transform:scaleX(0.9906);">Merge &amp; Center</div><div class="t" style="left:462.40px;top:135.43px;font-size:11.3px;line-height:11.3px;font-weight:normal;color:#666;transform:scaleX(1.0388);">Alignment</div><div class="t" style="left:670.50px;top:135.43px;font-size:11.3px;line-height:11.3px;font-weight:normal;color:#666;transform:scaleX(1.0075);">Number</div><div class="t" style="left:778.00px;top:99.84px;font-size:12px;line-height:12px;font-weight:normal;color:#444;transform:scaleX(1.0291);">Conditional</div><div class="t" style="left:775.00px;top:115.54px;font-size:12px;line-height:12px;font-weight:normal;color:#444;transform:scaleX(1.0061);">Formatting</div><div class="t" style="left:847.50px;top:99.84px;font-size:12px;line-height:12px;font-weight:normal;color:#444;transform:scaleX(0.9500);">Format as</div><div class="t" style="left:857.00px;top:115.54px;font-size:12px;line-height:12px;font-weight:normal;color:#444;transform:scaleX(0.9164);">Table</div><div class="t" style="left:913.60px;top:99.84px;font-size:12px;line-height:12px;font-weight:normal;color:#444;transform:scaleX(0.9298);">Cell</div><div class="t" style="left:904.00px;top:115.54px;font-size:12px;line-height:12px;font-weight:normal;color:#444;transform:scaleX(0.9113);">Styles</div><div class="t" style="left:844.40px;top:135.43px;font-size:11.3px;line-height:11.3px;font-weight:normal;color:#666;transform:scaleX(0.8976);">Styles</div><div class="t" style="left:960.00px;top:99.84px;font-size:12px;line-height:12px;font-weight:normal;color:#444;transform:scaleX(0.9500);">Insert</div><div class="t" style="left:1000.60px;top:99.84px;font-size:12px;line-height:12px;font-weight:normal;color:#444;transform:scaleX(0.9337);">Delete</div><div class="t" style="left:1040.50px;top:99.84px;font-size:12px;line-height:12px;font-weight:normal;color:#444;transform:scaleX(0.9842);">Format</div><div class="t" style="left:1005.70px;top:135.43px;font-size:11.3px;line-height:11.3px;font-weight:normal;color:#666;transform:scaleX(0.9084);">Cells</div><div class="t" style="left:1112.50px;top:65.84px;font-size:12px;line-height:12px;font-weight:normal;color:#444;transform:scaleX(0.9970);">AutoSum</div><div class="t" style="left:1112.50px;top:88.84px;font-size:12px;line-height:12px;font-weight:normal;color:#444;transform:scaleX(0.9121);">Fill</div><div class="t" style="left:1112.50px;top:111.84px;font-size:12px;line-height:12px;font-weight:normal;color:#444;transform:scaleX(0.9094);">Clear</div><div class="t" style="left:1186.40px;top:99.84px;font-size:12px;line-height:12px;font-weight:normal;color:#444;transform:scaleX(0.9835);">Sort &amp;</div><div class="t" style="left:1186.40px;top:115.54px;font-size:12px;line-height:12px;font-weight:normal;color:#444;transform:scaleX(0.9568);">Filter</div><div class="t" style="left:1228.00px;top:99.84px;font-size:12px;line-height:12px;font-weight:normal;color:#444;transform:scaleX(1.0317);">Find &amp;</div><div class="t" style="left:1226.00px;top:115.54px;font-size:12px;line-height:12px;font-weight:normal;color:#444;transform:scaleX(0.9295);">Select</div><div class="t" style="left:1160.60px;top:135.43px;font-size:11.3px;line-height:11.3px;font-weight:normal;color:#666;transform:scaleX(1.0420);">Editing</div><div class="t" style="left:165.50px;top:74.42px;font-size:12.5px;line-height:12.5px;font-weight:normal;color:#333;transform:scaleX(0.9309);">Calibri</div><div class="t" style="left:276.70px;top:73.92px;font-size:12.5px;line-height:12.5px;font-weight:normal;color:#333;transform:scaleX(0.7769);">11</div><div class="t" style="left:636.50px;top:74.42px;font-size:12.5px;line-height:12.5px;font-weight:normal;color:#333;transform:scaleX(0.8774);">General</div><div class="t" style="left:12.70px;top:167.42px;font-size:12.5px;line-height:12.5px;font-weight:normal;color:#222;">N39</div><div class="t" style="left:62.50px;top:199.64px;font-size:12px;line-height:12px;font-weight:normal;color:#444;">A</div><div class="t" style="left:143.00px;top:199.64px;font-size:12px;line-height:12px;font-weight:normal;color:#444;">B</div><div class="t" style="left:239.18px;top:199.64px;font-size:12px;line-height:12px;font-weight:normal;color:#444;">C</div><div class="t" style="left:353.68px;top:199.64px;font-size:12px;line-height:12px;font-weight:normal;color:#444;">D</div><div class="t" style="left:451.50px;top:199.64px;font-size:12px;line-height:12px;font-weight:normal;color:#444;">E</div><div class="t" style="left:530.83px;top:199.64px;font-size:12px;line-height:12px;font-weight:normal;color:#444;">F</div><div class="t" style="left:609.33px;top:199.64px;font-size:12px;line-height:12px;font-weight:normal;color:#444;">G</div><div class="t" style="left:692.67px;top:199.64px;font-size:12px;line-height:12px;font-weight:normal;color:#444;">H</div><div class="t" style="left:793.33px;top:199.64px;font-size:12px;line-height:12px;font-weight:normal;color:#444;">I</div><div class="t" style="left:879.50px;top:199.64px;font-size:12px;line-height:12px;font-weight:normal;color:#444;">J</div><div class="t" style="left:942.50px;top:199.64px;font-size:12px;line-height:12px;font-weight:normal;color:#444;">K</div><div class="t" style="left:1007.17px;top:199.64px;font-size:12px;line-height:12px;font-weight:normal;color:#444;">L</div><div class="t" style="left:1069.50px;top:199.64px;font-size:12px;line-height:12px;font-weight:normal;color:#444;">M</div><div class="t" style="left:1134.17px;top:199.64px;font-size:12px;line-height:12px;font-weight:normal;color:#2d4f3c;">N</div><div class="t" style="left:1197.83px;top:199.64px;font-size:12px;line-height:12px;font-weight:normal;color:#444;">O</div><div class="t" style="left:1262.50px;top:199.64px;font-size:12px;line-height:12px;font-weight:normal;color:#444;">P</div><div class="t" style="left:1326.33px;top:199.64px;font-size:12px;line-height:12px;font-weight:normal;color:#444;">Q</div><div class="t" style="left:9.38px;top:219.99px;font-size:13px;line-height:13px;font-weight:normal;color:#222;">1</div><div class="t" style="left:9.38px;top:239.99px;font-size:13px;line-height:13px;font-weight:normal;color:#2020ff;">6</div><div class="t" style="left:9.38px;top:259.99px;font-size:13px;line-height:13px;font-weight:normal;color:#2020ff;">7</div><div class="t" style="left:9.38px;top:279.99px;font-size:13px;line-height:13px;font-weight:normal;color:#2020ff;">8</div><div class="t" style="left:9.38px;top:299.99px;font-size:13px;line-height:13px;font-weight:normal;color:#2020ff;">9</div><div class="t" style="left:5.78px;top:319.99px;font-size:13px;line-height:13px;font-weight:normal;color:#2020ff;">10</div><div class="t" style="left:5.78px;top:339.99px;font-size:13px;line-height:13px;font-weight:normal;color:#222;">38</div><div class="t" style="left:5.78px;top:359.99px;font-size:13px;line-height:13px;font-weight:normal;color:#2d4f3c;">39</div><div class="t" style="left:5.78px;top:379.99px;font-size:13px;line-height:13px;font-weight:normal;color:#222;">40</div><div class="t" style="left:5.78px;top:399.99px;font-size:13px;line-height:13px;font-weight:normal;color:#222;">41</div><div class="t" style="left:5.78px;top:419.99px;font-size:13px;line-height:13px;font-weight:normal;color:#222;">42</div><div class="t" style="left:5.78px;top:439.99px;font-size:13px;line-height:13px;font-weight:normal;color:#222;">43</div><div class="t" style="left:5.78px;top:459.99px;font-size:13px;line-height:13px;font-weight:normal;color:#222;">44</div><div class="t" style="left:46.50px;top:220.19px;font-size:13px;line-height:13px;font-weight:bold;color:#fff;transform:scaleX(1.0573);">Model</div><div class="t" style="left:127.00px;top:220.19px;font-size:13px;line-height:13px;font-weight:bold;color:#fff;transform:scaleX(1.0179);">Power</div><div class="t" style="left:206.00px;top:220.19px;font-size:13px;line-height:13px;font-weight:bold;color:#fff;transform:scaleX(0.9466);">Cooling BTU</div><div class="t" style="left:320.00px;top:220.19px;font-size:13px;line-height:13px;font-weight:bold;color:#fff;transform:scaleX(0.9641);">Heating BTU</div><div class="t" style="left:435.40px;top:220.19px;font-size:13px;line-height:13px;font-weight:bold;color:#fff;transform:scaleX(1.0383);">Height</div><div class="t" style="left:515.30px;top:220.19px;font-size:13px;line-height:13px;font-weight:bold;color:#fff;transform:scaleX(1.0694);">Width</div><div class="t" style="left:592.70px;top:220.19px;font-size:13px;line-height:13px;font-weight:bold;color:#fff;transform:scaleX(0.9769);">Length</div><div class="t" style="left:674.00px;top:220.19px;font-size:13px;line-height:13px;font-weight:bold;color:#fff;transform:scaleX(1.0673);">Weight</div><div class="t" style="left:747.00px;top:220.19px;font-size:13px;line-height:13px;font-weight:bold;color:#fff;transform:scaleX(0.9524);">Cooling Cost</div><div class="t" style="left:28.20px;top:239.99px;font-size:13px;line-height:13px;font-weight:normal;color:#000;transform:scaleX(0.8851);">CLD036C LE</div><div class="t" style="left:110.00px;top:239.99px;font-size:13px;line-height:13px;font-weight:normal;color:#000;transform:scaleX(1.0514);">460/60/3</div><div class="t" style="left:252.95px;top:239.99px;font-size:13px;line-height:13px;font-weight:normal;color:#000;">37,500</div><div class="t" style="left:373.15px;top:239.99px;font-size:13px;line-height:13px;font-weight:normal;color:#000;">50,000</div><div class="t" style="left:478.45px;top:239.99px;font-size:13px;line-height:13px;font-weight:normal;color:#000;">32</div><div class="t" style="left:556.55px;top:239.99px;font-size:13px;line-height:13px;font-weight:normal;color:#000;">40</div><div class="t" style="left:637.45px;top:239.99px;font-size:13px;line-height:13px;font-weight:normal;color:#000;">60</div><div class="t" style="left:715.10px;top:239.99px;font-size:13px;line-height:13px;font-weight:normal;color:#000;">400</div><div class="t" style="left:809.95px;top:239.99px;font-size:13px;line-height:13px;font-weight:normal;color:#000;">46.50</div><div class="t" style="left:747.20px;top:239.99px;font-size:13px;line-height:13px;font-weight:normal;color:#000;transform:scaleX(0.9517);">$</div><div class="t" style="left:28.20px;top:259.99px;font-size:13px;line-height:13px;font-weight:normal;color:#000;transform:scaleX(0.8851);">CLD048C LE</div><div class="t" style="left:110.00px;top:259.99px;font-size:13px;line-height:13px;font-weight:normal;color:#000;transform:scaleX(1.0514);">460/60/3</div><div class="t" style="left:252.95px;top:259.99px;font-size:13px;line-height:13px;font-weight:normal;color:#000;">49,500</div><div class="t" style="left:373.15px;top:259.99px;font-size:13px;line-height:13px;font-weight:normal;color:#000;">50,000</div><div class="t" style="left:478.45px;top:259.99px;font-size:13px;line-height:13px;font-weight:normal;color:#000;">32</div><div class="t" style="left:556.55px;top:259.99px;font-size:13px;line-height:13px;font-weight:normal;color:#000;">45</div><div class="t" style="left:637.45px;top:259.99px;font-size:13px;line-height:13px;font-weight:normal;color:#000;">62</div><div class="t" style="left:715.10px;top:259.99px;font-size:13px;line-height:13px;font-weight:normal;color:#000;">420</div><div class="t" style="left:809.95px;top:259.99px;font-size:13px;line-height:13px;font-weight:normal;color:#000;">61.38</div><div class="t" style="left:747.20px;top:259.99px;font-size:13px;line-height:13px;font-weight:normal;color:#000;transform:scaleX(0.9517);">$</div><div class="t" style="left:28.20px;top:279.99px;font-size:13px;line-height:13px;font-weight:normal;color:#000;transform:scaleX(0.8851);">CLD060C LE</div><div class="t" style="left:110.00px;top:279.99px;font-size:13px;line-height:13px;font-weight:normal;color:#000;transform:scaleX(1.0514);">460/60/3</div><div class="t" style="left:252.95px;top:279.99px;font-size:13px;line-height:13px;font-weight:normal;color:#000;">63,200</div><div class="t" style="left:373.15px;top:279.99px;font-size:13px;line-height:13px;font-weight:normal;color:#000;">50,000</div><div class="t" style="left:478.45px;top:279.99px;font-size:13px;line-height:13px;font-weight:normal;color:#000;">36</div><div class="t" style="left:556.55px;top:279.99px;font-size:13px;line-height:13px;font-weight:normal;color:#000;">50</div><div class="t" style="left:637.45px;top:279.99px;font-size:13px;line-height:13px;font-weight:normal;color:#000;">64</div><div class="t" style="left:715.10px;top:279.99px;font-size:13px;line-height:13px;font-weight:normal;color:#000;">450</div><div class="t" style="left:809.95px;top:279.99px;font-size:13px;line-height:13px;font-weight:normal;color:#000;">78.37</div><div class="t" style="left:747.20px;top:279.99px;font-size:13px;line-height:13px;font-weight:normal;color:#000;transform:scaleX(0.9517);">$</div><div class="t" style="left:28.20px;top:299.99px;font-size:13px;line-height:13px;font-weight:normal;color:#000;transform:scaleX(0.8933);">CLD070B LE</div><div class="t" style="left:110.00px;top:299.99px;font-size:13px;line-height:13px;font-weight:normal;color:#000;transform:scaleX(1.0514);">460/60/4</div><div class="t" style="left:252.95px;top:299.99px;font-size:13px;line-height:13px;font-weight:normal;color:#000;">71,000</div><div class="t" style="left:373.15px;top:299.99px;font-size:13px;line-height:13px;font-weight:normal;color:#000;">50,000</div><div class="t" style="left:478.45px;top:299.99px;font-size:13px;line-height:13px;font-weight:normal;color:#000;">38</div><div class="t" style="left:556.55px;top:299.99px;font-size:13px;line-height:13px;font-weight:normal;color:#000;">55</div><div class="t" style="left:637.45px;top:299.99px;font-size:13px;line-height:13px;font-weight:normal;color:#000;">70</div><div class="t" style="left:715.10px;top:299.99px;font-size:13px;line-height:13px;font-weight:normal;color:#000;">460</div><div class="t" style="left:809.95px;top:299.99px;font-size:13px;line-height:13px;font-weight:normal;color:#000;">88.04</div><div class="t" style="left:747.20px;top:299.99px;font-size:13px;line-height:13px;font-weight:normal;color:#000;transform:scaleX(0.9517);">$</div><div class="t" style="left:28.20px;top:319.99px;font-size:13px;line-height:13px;font-weight:normal;color:#000;transform:scaleX(0.8851);">CLD036D LE</div><div class="t" style="left:110.00px;top:319.99px;font-size:13px;line-height:13px;font-weight:normal;color:#000;transform:scaleX(1.0514);">575/60/3</div><div class="t" style="left:252.95px;top:319.99px;font-size:13px;line-height:13px;font-weight:normal;color:#000;">37,500</div><div class="t" style="left:373.15px;top:319.99px;font-size:13px;line-height:13px;font-weight:normal;color:#000;">50,000</div><div class="t" style="left:478.45px;top:319.99px;font-size:13px;line-height:13px;font-weight:normal;color:#000;">36</div><div class="t" style="left:556.55px;top:319.99px;font-size:13px;line-height:13px;font-weight:normal;color:#000;">40</div><div class="t" style="left:637.45px;top:319.99px;font-size:13px;line-height:13px;font-weight:normal;color:#000;">66</div><div class="t" style="left:715.10px;top:319.99px;font-size:13px;line-height:13px;font-weight:normal;color:#000;">470</div><div class="t" style="left:809.95px;top:319.99px;font-size:13px;line-height:13px;font-weight:normal;color:#000;">46.50</div><div class="t" style="left:747.20px;top:319.99px;font-size:13px;line-height:13px;font-weight:normal;color:#000;transform:scaleX(0.9517);">$</div>
<div class="r" style="left:90px;top:217px;width:17px;height:17px;background:linear-gradient(#fdfdfd,#eceff4);box-sizing:border-box;border:1px solid #a6a6a6;"></div><svg class="r" style="left:90px;top:217px" width="17" height="17"><path d="M4.8 6.8H12.2L8.5 11Z" fill="#555"/></svg><div class="r" style="left:169px;top:217px;width:17px;height:17px;background:linear-gradient(#fdfdfd,#eceff4);box-sizing:border-box;border:1px solid #a6a6a6;"></div><svg class="r" style="left:169px;top:217px" width="17" height="17"><path d="M4.8 6.8H12.2L8.5 11Z" fill="#555"/></svg><div class="r" style="left:283px;top:217px;width:17px;height:17px;background:linear-gradient(#fdfdfd,#eceff4);box-sizing:border-box;border:1px solid #a6a6a6;"></div><svg class="r" style="left:283px;top:217px" width="17" height="17"><path d="M4.8 6.8H12.2L8.5 11Z" fill="#555"/></svg><div class="r" style="left:398px;top:217px;width:17px;height:17px;background:linear-gradient(#fdfdfd,#eceff4);box-sizing:border-box;border:1px solid #a6a6a6;"></div><svg class="r" style="left:398px;top:217px" width="17" height="17"><path d="M6.2 4H15L12 7.5V11.5H9.2V7.5Z" fill="#555"/><path d="M3 10H8L5.5 13Z" fill="#555"/></svg><div class="r" style="left:478px;top:217px;width:17px;height:17px;background:linear-gradient(#fdfdfd,#eceff4);box-sizing:border-box;border:1px solid #a6a6a6;"></div><svg class="r" style="left:478px;top:217px" width="17" height="17"><path d="M4.8 6.8H12.2L8.5 11Z" fill="#555"/></svg><div class="r" style="left:556px;top:217px;width:17px;height:17px;background:linear-gradient(#fdfdfd,#eceff4);box-sizing:border-box;border:1px solid #a6a6a6;"></div><svg class="r" style="left:556px;top:217px" width="17" height="17"><path d="M4.8 6.8H12.2L8.5 11Z" fill="#555"/></svg><div class="r" style="left:637px;top:217px;width:17px;height:17px;background:linear-gradient(#fdfdfd,#eceff4);box-sizing:border-box;border:1px solid #a6a6a6;"></div><svg class="r" style="left:637px;top:217px" width="17" height="17"><path d="M4.8 6.8H12.2L8.5 11Z" fill="#555"/></svg><div class="r" style="left:722px;top:217px;width:17px;height:17px;background:linear-gradient(#fdfdfd,#eceff4);box-sizing:border-box;border:1px solid #a6a6a6;"></div><svg class="r" style="left:722px;top:217px" width="17" height="17"><path d="M4.8 6.8H12.2L8.5 11Z" fill="#555"/></svg><div class="r" style="left:833px;top:217px;width:17px;height:17px;background:linear-gradient(#fdfdfd,#eceff4);box-sizing:border-box;border:1px solid #a6a6a6;"></div><svg class="r" style="left:833px;top:217px" width="17" height="17"><path d="M4.8 6.8H12.2L8.5 11Z" fill="#555"/></svg><div class="r" style="left:1105px;top:354px;width:67px;height:23px;background:transparent;box-sizing:border-box;border:2px solid #217346;"></div><div class="r" style="left:1167px;top:372px;width:6px;height:6px;background:#fff;"></div><div class="r" style="left:1168px;top:373px;width:5px;height:5px;background:#217346;"></div><svg class="r" style="left:845px;top:331px" width="5" height="4"><path d="M4 0V4H0Z" fill="#3a5fb0"/></svg>
</body></html>
